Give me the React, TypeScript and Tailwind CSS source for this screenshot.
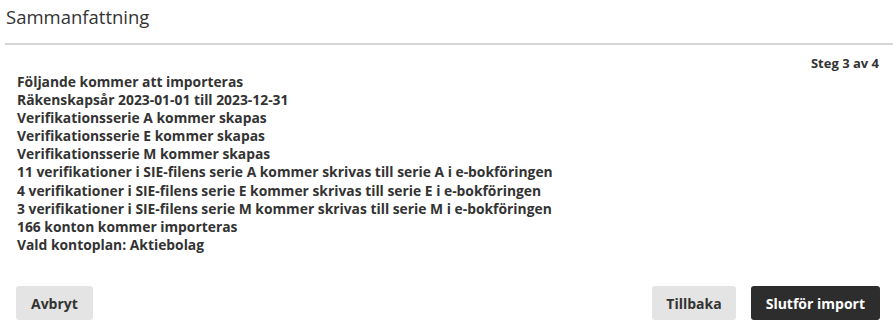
import React from "react";

const lines = [
  "Följande kommer att importeras",
  "Räkenskapsår 2023-01-01 till 2023-12-31",
  "Verifikationsserie A kommer skapas",
  "Verifikationsserie E kommer skapas",
  "Verifikationsserie M kommer skapas",
  "11 verifikationer i SIE-filens serie A kommer skrivas till serie A i e-bokföringen",
  "4 verifikationer i SIE-filens serie E kommer skrivas till serie E i e-bokföringen",
  "3 verifikationer i SIE-filens serie M kommer skrivas till serie M i e-bokföringen",
  "166 konton kommer importeras",
  "Vald kontoplan: Aktiebolag",
];

export default function App() {
  return (
    <div className="w-[896px] h-[331px] bg-white text-[#333] font-['Open_Sans',sans-serif] flex flex-col">
      <div className="ml-[5px] mr-[3px] border-b-2 border-[#d6d6d6] pt-[4px] pb-[14px]">
        <h1 className="text-[18.5px] leading-[25px] font-normal px-[1px]">Sammanfattning</h1>
      </div>
      <div className="flex-1 flex flex-col px-[16px] pt-[9px] pb-[11px]">
        <div className="text-right text-[13px] font-bold leading-[18px] pr-[1px]">Steg 3 av 4</div>
        <div className="text-[13.85px] font-bold leading-[18.1px] mt-[1px] pl-[1px]">
          {lines.map((l) => (
            <div key={l}>{l}</div>
          ))}
        </div>
        <div className="mt-auto flex items-center">
          <button className="h-[34px] px-[15px] rounded-[3px] bg-[#e4e4e4] text-[#333] text-[14px] font-bold">Avbryt</button>
          <div className="flex-1" />
          <button className="h-[34px] px-[14px] rounded-[3px] bg-[#e4e4e4] text-[#333] text-[14px] font-bold">Tillbaka</button>
          <button className="ml-[15px] h-[34px] px-[15px] rounded-[3px] bg-[#2d2d2d] text-white text-[14px] font-bold">Slutför import</button>
        </div>
      </div>
    </div>
  );
}
